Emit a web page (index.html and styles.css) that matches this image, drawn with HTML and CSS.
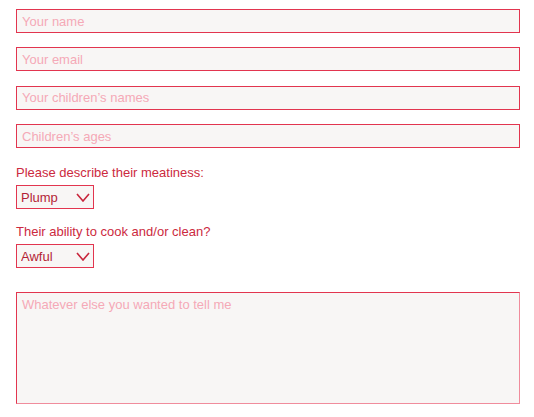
FILE: index.html
```html
<!DOCTYPE html>
<html>
<head>
<meta charset="utf-8">
<link rel="stylesheet" href="styles.css">
</head>
<body>
<form class="form">
  <input class="field" type="text" placeholder="Your name">
  <input class="field" type="email" placeholder="Your email">
  <input class="field" type="text" placeholder="Your children’s names">
  <input class="field" type="text" placeholder="Children’s ages">
  <label class="label label-first">Please describe their meatiness:</label>
  <div class="select-wrap">
    <select class="select"><option>Plump</option></select>
    <svg class="chevron" width="14" height="9" viewBox="0 0 14 9"><path d="M1 1 L7 8 L13 1" fill="none" stroke="#c8263c" stroke-width="1.6"/></svg>
  </div>
  <label class="label">Their ability to cook and/or clean?</label>
  <div class="select-wrap">
    <select class="select"><option>Awful</option></select>
    <svg class="chevron" width="14" height="9" viewBox="0 0 14 9"><path d="M1 1 L7 8 L13 1" fill="none" stroke="#c8263c" stroke-width="1.6"/></svg>
  </div>
  <textarea class="message" placeholder="Whatever else you wanted to tell me"></textarea>
</form>
</body>
</html>
```
FILE: styles.css
```css
html, body {
  margin: 0;
  padding: 0;
  background: #ffffff;
}
.form {
  display: flex;
  flex-direction: column;
  align-items: flex-start;
  padding: 9px 0 0 16px;
  font-family: "Liberation Sans", Arial, sans-serif;
  font-size: 13px;
}
.field {
  box-sizing: border-box;
  width: 504px;
  height: 24px;
  margin: 0 0 14.4px 0;
  padding: 0 5px;
  border: 1px solid #e2354f;
  background: #f8f6f5;
  font-family: inherit;
  font-size: 13px;
  color: #c8263c;
  outline: none;
  border-radius: 0;
}
.field::placeholder,
.message::placeholder {
  color: #f5a9b7;
  opacity: 1;
}
.label {
  display: block;
  color: #cc2a40;
  line-height: 15px;
  margin: 0 0 5px 0;
}
.label-first {
  margin-top: 2px;
}
.select-wrap {
  position: relative;
  width: 78px;
  height: 24px;
  margin-bottom: 15px;
}
.select {
  appearance: none;
  -webkit-appearance: none;
  box-sizing: border-box;
  width: 78px;
  height: 24px;
  margin: 0;
  padding: 1px 0 0 4px;
  border: 1px solid #e2354f;
  border-radius: 0;
  background: #f8f6f5;
  font-family: "Liberation Sans", Arial, sans-serif;
  font-size: 13px;
  color: #b41f36;
  outline: none;
}
.chevron {
  position: absolute;
  left: 60px;
  top: 8px;
  pointer-events: none;
}
.message {
  box-sizing: border-box;
  width: 504px;
  height: 112px;
  margin-top: 9px;
  padding: 4px 5px;
  border: 1px solid #e2354f;
  border-right-color: #f08c9c;
  border-bottom-color: #f08c9c;
  background: #f8f6f5;
  font-family: "Liberation Sans", Arial, sans-serif;
  font-size: 13px;
  resize: none;
  outline: none;
  border-radius: 0;
}
```
